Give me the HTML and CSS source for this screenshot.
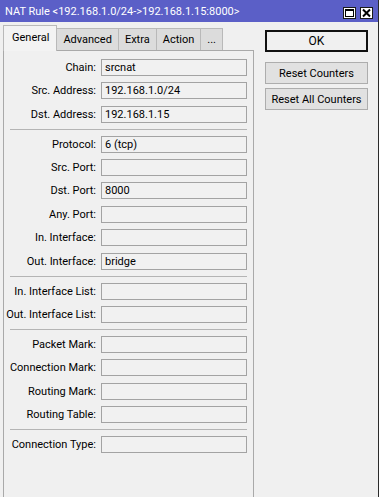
FILE: index.html
```html
<!DOCTYPE html>
<html>
<head>
  <link rel="stylesheet" href="styles.css">
</head>
<body>

  <div class="window">
    <div class="titlebar">
      <span class="title">NAT Rule &lt;192.168.1.0/24-&gt;192.168.1.15:8000&gt;</span>
      <div class="title-buttons">
        <span class="tbtn">
          <svg width="11" height="10" viewBox="0 0 11 10"><rect x="1.5" y="1.5" width="8" height="7" fill="none" stroke="#000" stroke-width="1"/><rect x="1" y="1" width="9" height="2" fill="#000"/></svg>
        </span>
        <span class="tbtn">
          <svg width="11" height="10" viewBox="0 0 11 10"><path d="M2 1.5 L9 8.5 M9 1.5 L2 8.5" stroke="#000" stroke-width="2"/></svg>
        </span>
      </div>
    </div>

    <div class="window-body">
      <div class="main">
        <div class="tabs">
          <div class="tab active">General</div>
          <div class="tab">Advanced</div>
          <div class="tab">Extra</div>
          <div class="tab">Action</div>
          <div class="tab">...</div>
        </div>

        <div class="panel">
          <div class="row"><span class="label">Chain:</span><span class="field">srcnat</span></div>
          <div class="row"><span class="label">Src. Address:</span><span class="field">192.168.1.0/24</span></div>
          <div class="row"><span class="label">Dst. Address:</span><span class="field">192.168.1.15</span></div>
          <div class="divider"></div>

          <div class="row"><span class="label">Protocol:</span><span class="field">6 (tcp)</span></div>
          <div class="row"><span class="label">Src. Port:</span><span class="field"></span></div>
          <div class="row"><span class="label">Dst. Port:</span><span class="field">8000</span></div>
          <div class="row"><span class="label">Any. Port:</span><span class="field"></span></div>
          <div class="row"><span class="label">In. Interface:</span><span class="field"></span></div>
          <div class="row"><span class="label">Out. Interface:</span><span class="field">bridge</span></div>
          <div class="divider"></div>

          <div class="row"><span class="label">In. Interface List:</span><span class="field"></span></div>
          <div class="row"><span class="label">Out. Interface List:</span><span class="field"></span></div>
          <div class="divider"></div>

          <div class="row"><span class="label">Packet Mark:</span><span class="field"></span></div>
          <div class="row"><span class="label">Connection Mark:</span><span class="field"></span></div>
          <div class="row"><span class="label">Routing Mark:</span><span class="field"></span></div>
          <div class="row"><span class="label">Routing Table:</span><span class="field"></span></div>
          <div class="divider"></div>

          <div class="row"><span class="label">Connection Type:</span><span class="field"></span></div>
        </div>
      </div>

      <div class="side">
        <button class="btn btn-default">OK</button>
        <button class="btn">Reset Counters</button>
        <button class="btn">Reset All Counters</button>
      </div>
    </div>
  </div>

  <div class="behind"></div>

</body>
</html>
```

FILE: styles.css
```css
body {
  margin: 0;
  background-color: #fff;
  font-family: Roboto, "Liberation Sans", Arial, sans-serif;
  font-size: 11px;
  color: #000;
  display: flex;
  height: 497px;
  overflow: hidden;
}
.window {
  width: 378px;
  border-right: 1px solid #2b2b2b;
  background-color: #f0f0f0;
  display: flex;
  flex-direction: column;
}
.behind {
  flex: 1;
  background-color: #fff;
}
.titlebar {
  height: 22px;
  background-color: #5b5fc7;
  color: #fff;
  display: flex;
  align-items: center;
  padding-left: 5px;
  padding-right: 5px;
}
.title {
  flex: 1;
  font-size: 11px;
  white-space: nowrap;
}
.title-buttons {
  display: flex;
  gap: 4px;
  margin-top: 3px;
}
.tbtn {
  width: 11px;
  height: 10px;
  background-color: #fff;
  border: 1px solid #1a1a1a;
  display: flex;
}
.window-body {
  flex: 1;
  display: flex;
  min-height: 0;
}
.main {
  width: 251px;
  margin-left: 3px;
  display: flex;
  flex-direction: column;
}
.tabs {
  display: flex;
  align-items: flex-end;
  height: 25px;
  margin-top: 3px;
  position: relative;
  z-index: 1;
}
.tab {
  height: 21px;
  line-height: 21px;
  padding: 0 6px;
  background-color: #dcdcdc;
  border: 1px solid #b9b9b9;
  border-bottom: none;
  border-left: none;
  white-space: nowrap;
}
.tab.active {
  height: 25px;
  line-height: 24px;
  background-color: #f3f3f3;
  border-left: 1px solid #b9b9b9;
  margin-bottom: -1px;
  padding: 0 7px 0 8px;
}
.panel {
  flex: 1;
  border: 1px solid #a9a9a9;
  border-bottom: none;
  padding: 8px 6px 0 0;
}
.row {
  display: flex;
  align-items: center;
  height: 17px;
  margin-bottom: 6.4px;
}
.label {
  width: 92px;
  text-align: right;
  white-space: nowrap;
  margin-right: 5px;
}
.field {
  flex: 1;
  height: 15px;
  line-height: 15px;
  border: 1px solid #a3a3a3;
  background-color: #f1f1f1;
  padding-left: 3px;
}
.divider {
  height: 1px;
  background-color: #b4b4b4;
  margin: 0 0 5.5px 6px;
}
.side {
  width: 103px;
  margin-left: 11px;
  padding-top: 8px;
  display: flex;
  flex-direction: column;
}
.btn {
  height: 22px;
  font-family: Roboto, "Liberation Sans", Arial, sans-serif;
  font-size: 11px;
  color: #000;
  background-color: #e1e1e1;
  border: 1px solid #adadad;
  padding: 0;
  margin-bottom: 4px;
}
.btn-default {
  font-size: 12px;
  background-color: #f0f0f0;
  border: 2px solid #111;
  margin-bottom: 10px;
}
```
